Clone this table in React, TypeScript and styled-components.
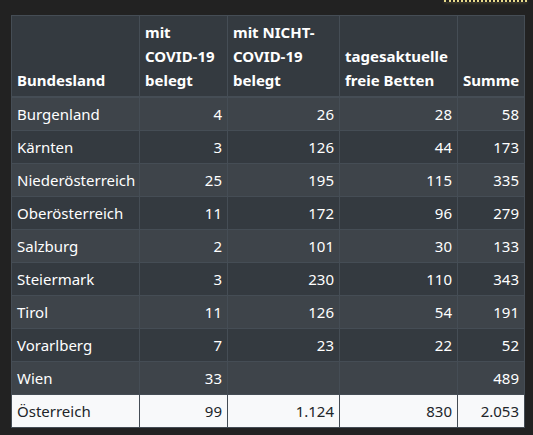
import styled, { createGlobalStyle } from 'styled-components';

type Row = {
  land: string;
  covid?: string;
  nonCovid?: string;
  free?: string;
  sum: string;
};

const rows: Row[] = [
  { land: 'Burgenland', covid: '4', nonCovid: '26', free: '28', sum: '58' },
  { land: 'Kärnten', covid: '3', nonCovid: '126', free: '44', sum: '173' },
  { land: 'Niederösterreich', covid: '25', nonCovid: '195', free: '115', sum: '335' },
  { land: 'Oberösterreich', covid: '11', nonCovid: '172', free: '96', sum: '279' },
  { land: 'Salzburg', covid: '2', nonCovid: '101', free: '30', sum: '133' },
  { land: 'Steiermark', covid: '3', nonCovid: '230', free: '110', sum: '343' },
  { land: 'Tirol', covid: '11', nonCovid: '126', free: '54', sum: '191' },
  { land: 'Vorarlberg', covid: '7', nonCovid: '23', free: '22', sum: '52' },
  { land: 'Wien', covid: '33', sum: '489' },
];

const total: Row = { land: 'Österreich', covid: '99', nonCovid: '1.124', free: '830', sum: '2.053' };

const widths = [128, 88, 112, 118, 67];

export default function App() {
  return (
    <>
      <GlobalStyle />
      <Page>
        <TopBar>
          <Marker />
        </TopBar>
        <Table>
          <colgroup>
            {widths.map((w, i) => (
              <col key={i} style={{ width: w }} />
            ))}
          </colgroup>
          <thead>
            <tr>
              <Th>Bundesland</Th>
              <Th>mit COVID-19 belegt</Th>
              <Th>mit NICHT-COVID-19 belegt</Th>
              <Th>tagesaktuelle freie Betten</Th>
              <Th>Summe</Th>
            </tr>
          </thead>
          <tbody>
            {rows.map((r, i) => (
              <BodyRow key={r.land} $odd={i % 2 === 0}>
                <Td>{r.land}</Td>
                <Td $num>{r.covid}</Td>
                <Td $num>{r.nonCovid}</Td>
                <Td $num>{r.free}</Td>
                <Td $num>{r.sum}</Td>
              </BodyRow>
            ))}
            <TotalRow>
              <Td>{total.land}</Td>
              <Td $num>{total.covid}</Td>
              <Td $num>{total.nonCovid}</Td>
              <Td $num>{total.free}</Td>
              <Td $num>{total.sum}</Td>
            </TotalRow>
          </tbody>
        </Table>
      </Page>
    </>
  );
}

const GlobalStyle = createGlobalStyle`
  html, body {
    margin: 0;
    background: #222222;
  }
  body {
    font-family: "Noto Sans", "Open Sans", sans-serif;
  }
`;

const Page = styled.div`
  width: 533px;
  height: 435px;
  box-sizing: border-box;
  padding: 0 0 0 11px;
  overflow: hidden;
`;

const TopBar = styled.div`
  display: flex;
  justify-content: flex-end;
  height: 15px;
  padding-right: 6px;
`;

const Marker = styled.div`
  width: 83px;
  height: 0;
  border-bottom: 2px dotted #e6d98a;
  box-shadow: 0 1px 3px rgba(230, 217, 138, 0.25);
`;

const Table = styled.table`
  border-collapse: collapse;
  table-layout: fixed;
  width: 513px;
  color: #ffffff;
  font-size: 15px;
  line-height: 24px;
  border: 1px solid #454d55;
`;

const Th = styled.th`
  background: #343a40;
  border: 1px solid #454d55;
  border-bottom-width: 2px;
  padding: 4px 5px;
  text-align: left;
  vertical-align: bottom;
  font-weight: 700;
`;

const BodyRow = styled.tr<{ $odd: boolean }>`
  background: ${(p) => (p.$odd ? '#3e444a' : '#343a40')};
`;

const TotalRow = styled.tr`
  background: #f8f9fa;
  color: #212529;
`;

const Td = styled.td<{ $num?: boolean }>`
  border: 1px solid #454d55;
  padding: 4px 5px;
  text-align: ${(p) => (p.$num ? 'right' : 'left')};
  vertical-align: top;
`;
